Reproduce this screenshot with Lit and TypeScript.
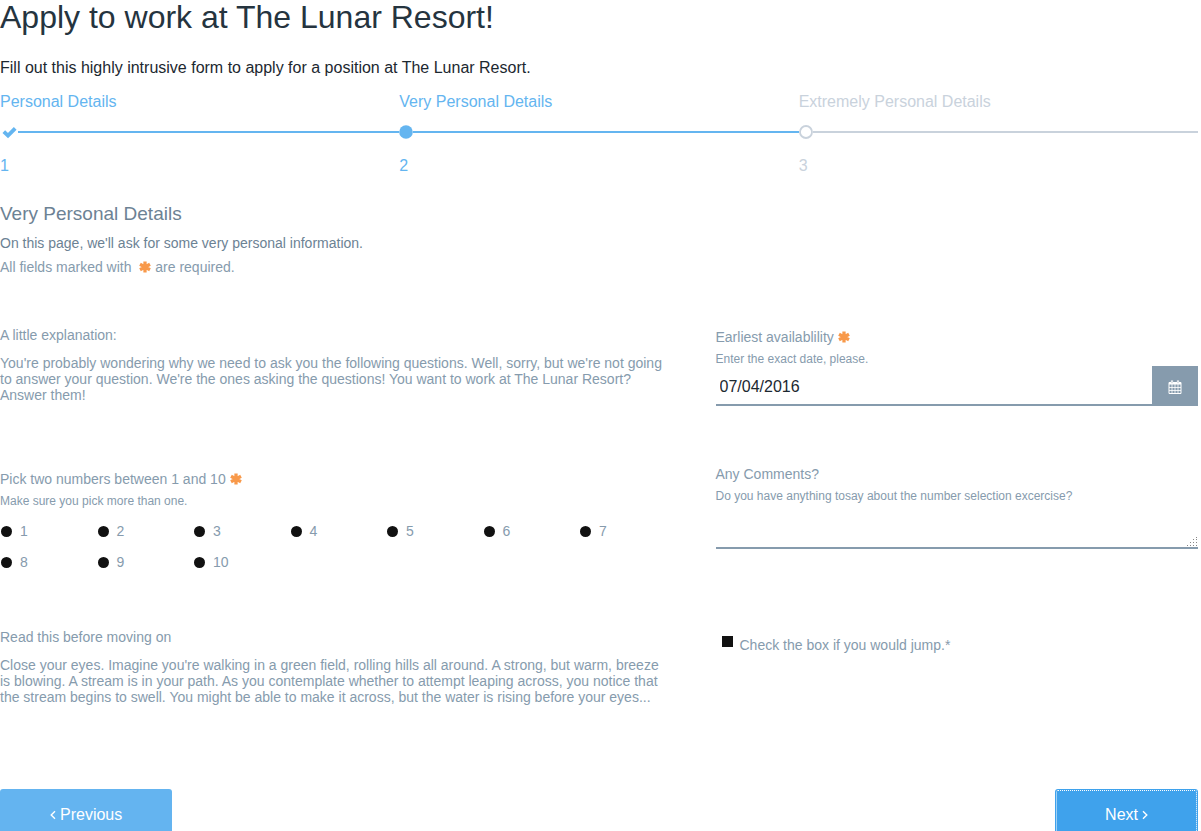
import { LitElement, html, css, svg } from "lit";
import { customElement, property } from "lit/decorators.js";

const asterisk = html`<svg class="star" viewBox="0 0 12 12" role="img" aria-label="required">
  <path d="M6 0.6V11.4M1 3.3L11 8.7M11 3.3L1 8.7" stroke="currentColor" stroke-width="3.3" stroke-linejoin="round" fill="none"></path>
</svg>`;

@customElement("wizard-steps")
class WizardSteps extends LitElement {
  @property({ type: Number }) current = 2;

  static styles = css`
    :host { display: block; }
    .steps { display: grid; grid-template-columns: repeat(3, 1fr); list-style: none; margin: 0; padding: 0; }
    .step { color: #64b5f0; font-size: 16px; line-height: 20px; }
    .todo { color: #c9d2dc; }
    .track { display: flex; align-items: center; height: 14px; margin: 13px 0 17px; }
    .track svg { width: 14px; height: 14px; flex: none; }
    .track .check { width: 18px; }
    .line { flex: 1; height: 2px; background: currentColor; }
  `;

  private marker(n: number) {
    if (n < this.current)
      return html`<svg class="check" viewBox="0 0 18 14"><path d="M3.8 6.6L8 10.6L15.2 3.4" fill="none" stroke="currentColor" stroke-width="3.8"></path></svg>`;
    return html`<svg viewBox="0 0 14 14">${n === this.current
      ? svg`<circle cx="7" cy="7" r="6.8" fill="currentColor"></circle>`
      : svg`<circle cx="7" cy="7" r="6" fill="#fff" stroke="currentColor" stroke-width="1.8"></circle>`}</svg>`;
  }

  render() {
    const names = ["Personal Details", "Very Personal Details", "Extremely Personal Details"];
    return html`<ol class="steps">${names.map((name, i) => html`
      <li class="step ${i + 1 > this.current ? "todo" : ""}">
        <div>${name}</div>
        <div class="track">${this.marker(i + 1)}<span class="line"></span></div>
        <div>${i + 1}</div>
      </li>`)}</ol>`;
  }
}

@customElement("app-root")
class AppRoot extends LitElement {
  static styles = css`
    :host {
      display: block; box-sizing: border-box; height: 100vh; overflow-y: auto; scrollbar-width: none;
      padding-right: 3px; background: #fff; color: #869bad;
      font-family: "Liberation Sans", Arial, sans-serif; font-size: 14px; line-height: 16px;
    }
    h1, h2, h3, p, fieldset, legend { margin: 0; padding: 0; border: 0; font-weight: 400; font-size: inherit; }
    h1 { font-size: 32px; line-height: 34px; color: #25343f; }
    .intro { margin: 24px 0 14px; font-size: 16px; line-height: 20px; color: #1c2830; }
    h2 { margin-top: 27px; font-size: 19px; line-height: 22px; color: #6c8294; }
    .lead { margin-top: 10px; color: #6c8294; }
    .required { margin-top: 8px; }
    .required .star { margin-left: 4px; }
    .star { width: 12px; height: 12px; color: #f8994a; vertical-align: -1px; }
    .columns { display: grid; grid-template-columns: 7fr 5fr; column-gap: 40px; margin-top: 52px; }
    .column { display: flex; flex-direction: column; min-width: 0; }
    .text { margin-top: 12px; padding-right: 6px; }
    .hint { margin-top: 7px; font-size: 12px; line-height: 14px; }
    .pick { margin-top: 68px; }
    .numbers { display: grid; grid-template-columns: repeat(7, 1fr); row-gap: 15px; margin-top: 15px; }
    .option { display: flex; align-items: center; gap: 8px; }
    .read { margin-top: 59px; }
    input { margin: 0; }
    .radio { appearance: none; width: 11px; height: 11px; margin-left: 1px; border-radius: 50%; background: #111; }
    .side { padding-top: 2px; }
    .side label { display: block; }
    .date { display: flex; height: 40px; }
    .date input {
      flex: 1; min-width: 0; box-sizing: border-box; padding: 4px 4px 0; border: 0; border-bottom: 2px solid #869bad;
      border-radius: 0; background: #fff; font: inherit; font-size: 16px; color: #1c2830; outline: 0;
    }
    .calendar { width: 46px; padding: 2px 0 0; border: 0; background: #869bad; color: #fff; display: grid; place-items: center; }
    .calendar svg { width: 14px; height: 14px; }
    .comments { margin-top: 60px; }
    .area { position: relative; display: block; }
    textarea {
      display: block; box-sizing: border-box; width: 100%; height: 46px; padding: 4px; border: 0; resize: none;
      border-bottom: 2px solid #869bad; background: transparent; font: inherit; outline: 0;
    }
    .grip { position: absolute; right: 0; bottom: 2px; width: 11px; height: 10px; }
    .side .jump { display: flex; gap: 7px; margin: 88px 0 0 6px; }
    .box { appearance: none; width: 11px; height: 11px; background: #111; flex: none; margin-top: -1px; }
    .actions { display: flex; justify-content: space-between; margin-top: 84px; }
    .button {
      display: flex; align-items: center; justify-content: center; gap: 4px; height: 52px; padding: 0 50px; border: 0;
      border-radius: 3px; background: #64b4f0; color: #fff; font: inherit; font-size: 16px;
    }
    .next { background: #3fa2ec; outline: 1px dotted #fff; outline-offset: -2px; }
    .button svg { width: 6px; height: 10px; }
  `;

  render() {
    return html`
      <h1>Apply to work at The Lunar Resort!</h1>
      <p class="intro">Fill out this highly intrusive form to apply for a position at The Lunar Resort.</p>
      <wizard-steps .current=${2}></wizard-steps>
      <h2>Very Personal Details</h2>
      <p class="lead">On this page, we'll ask for some very personal information.</p>
      <p class="required">All fields marked with ${asterisk} are required.</p>
      <form @submit=${(e: Event) => e.preventDefault()}>
        <div class="columns">
          <div class="column">
            <h3>A little explanation:</h3>
            <p class="text">You're probably wondering why we need to ask you the following questions. Well, sorry, but we're not going to answer your question. We're the ones asking the questions! You want to work at The Lunar Resort? Answer them!</p>
            <fieldset class="pick">
              <legend>Pick two numbers between 1 and 10 ${asterisk}</legend>
              <p class="hint">Make sure you pick more than one.</p>
              <div class="numbers">
                ${Array.from({ length: 10 }, (_, i) => html`<label class="option"><input class="radio" type="radio" name="number" value=${i + 1}>${i + 1}</label>`)}
              </div>
            </fieldset>
            <h3 class="read">Read this before moving on</h3>
            <p class="text">Close your eyes. Imagine you're walking in a green field, rolling hills all around. A strong, but warm, breeze is blowing. A stream is in your path. As you contemplate whether to attempt leaping across, you notice that the stream begins to swell. You might be able to make it across, but the water is rising before your eyes...</p>
          </div>
          <div class="column side">
            <label for="date">Earliest availablility ${asterisk}</label>
            <p class="hint">Enter the exact date, please.</p>
            <div class="date">
              <input id="date" type="text" value="07/04/2016">
              <button class="calendar" type="button" aria-label="Open calendar">
                <svg viewBox="0 0 14 14" fill="none" stroke="currentColor">
                  <path d="M1 2.5H13V13.5H1Z"></path>
                  <path d="M1 3.5H13" stroke-width="2"></path>
                  <path d="M1 7.5H13M1 10.5H13M4 4V13.5M7 4V13.5M10 4V13.5" stroke-width="0.8"></path>
                  <path d="M4 0.5V3.5M10 0.5V3.5" stroke-width="2.2"></path>
                  <path d="M4 1.2V3.2M10 1.2V3.2" stroke="#869bad" stroke-width="0.6"></path>
                </svg>
              </button>
            </div>
            <label class="comments" for="comments">Any Comments?</label>
            <p class="hint">Do you have anything tosay about the number selection excercise?</p>
            <span class="area">
              <textarea id="comments"></textarea>
              <svg class="grip" viewBox="0 0 11 10" fill="none" stroke="#888">
                <path d="M0 8.5H11M3 5.5H11M6 2.5H11M9 0.5H11" stroke-dasharray="1 2"></path>
              </svg>
            </span>
            <label class="jump"><input class="box" type="checkbox">Check the box if you would jump.*</label>
          </div>
        </div>
        <div class="actions">
          <button class="button" type="button">
            <svg viewBox="0 0 6 10"><path d="M5 1.2L1.2 5L5 8.8" fill="none" stroke="currentColor" stroke-width="1.4"></path></svg>Previous
          </button>
          <button class="button next" type="submit">
            Next<svg viewBox="0 0 6 10"><path d="M1 1.2L4.8 5L1 8.8" fill="none" stroke="currentColor" stroke-width="1.4"></path></svg>
          </button>
        </div>
      </form>`;
  }
}
